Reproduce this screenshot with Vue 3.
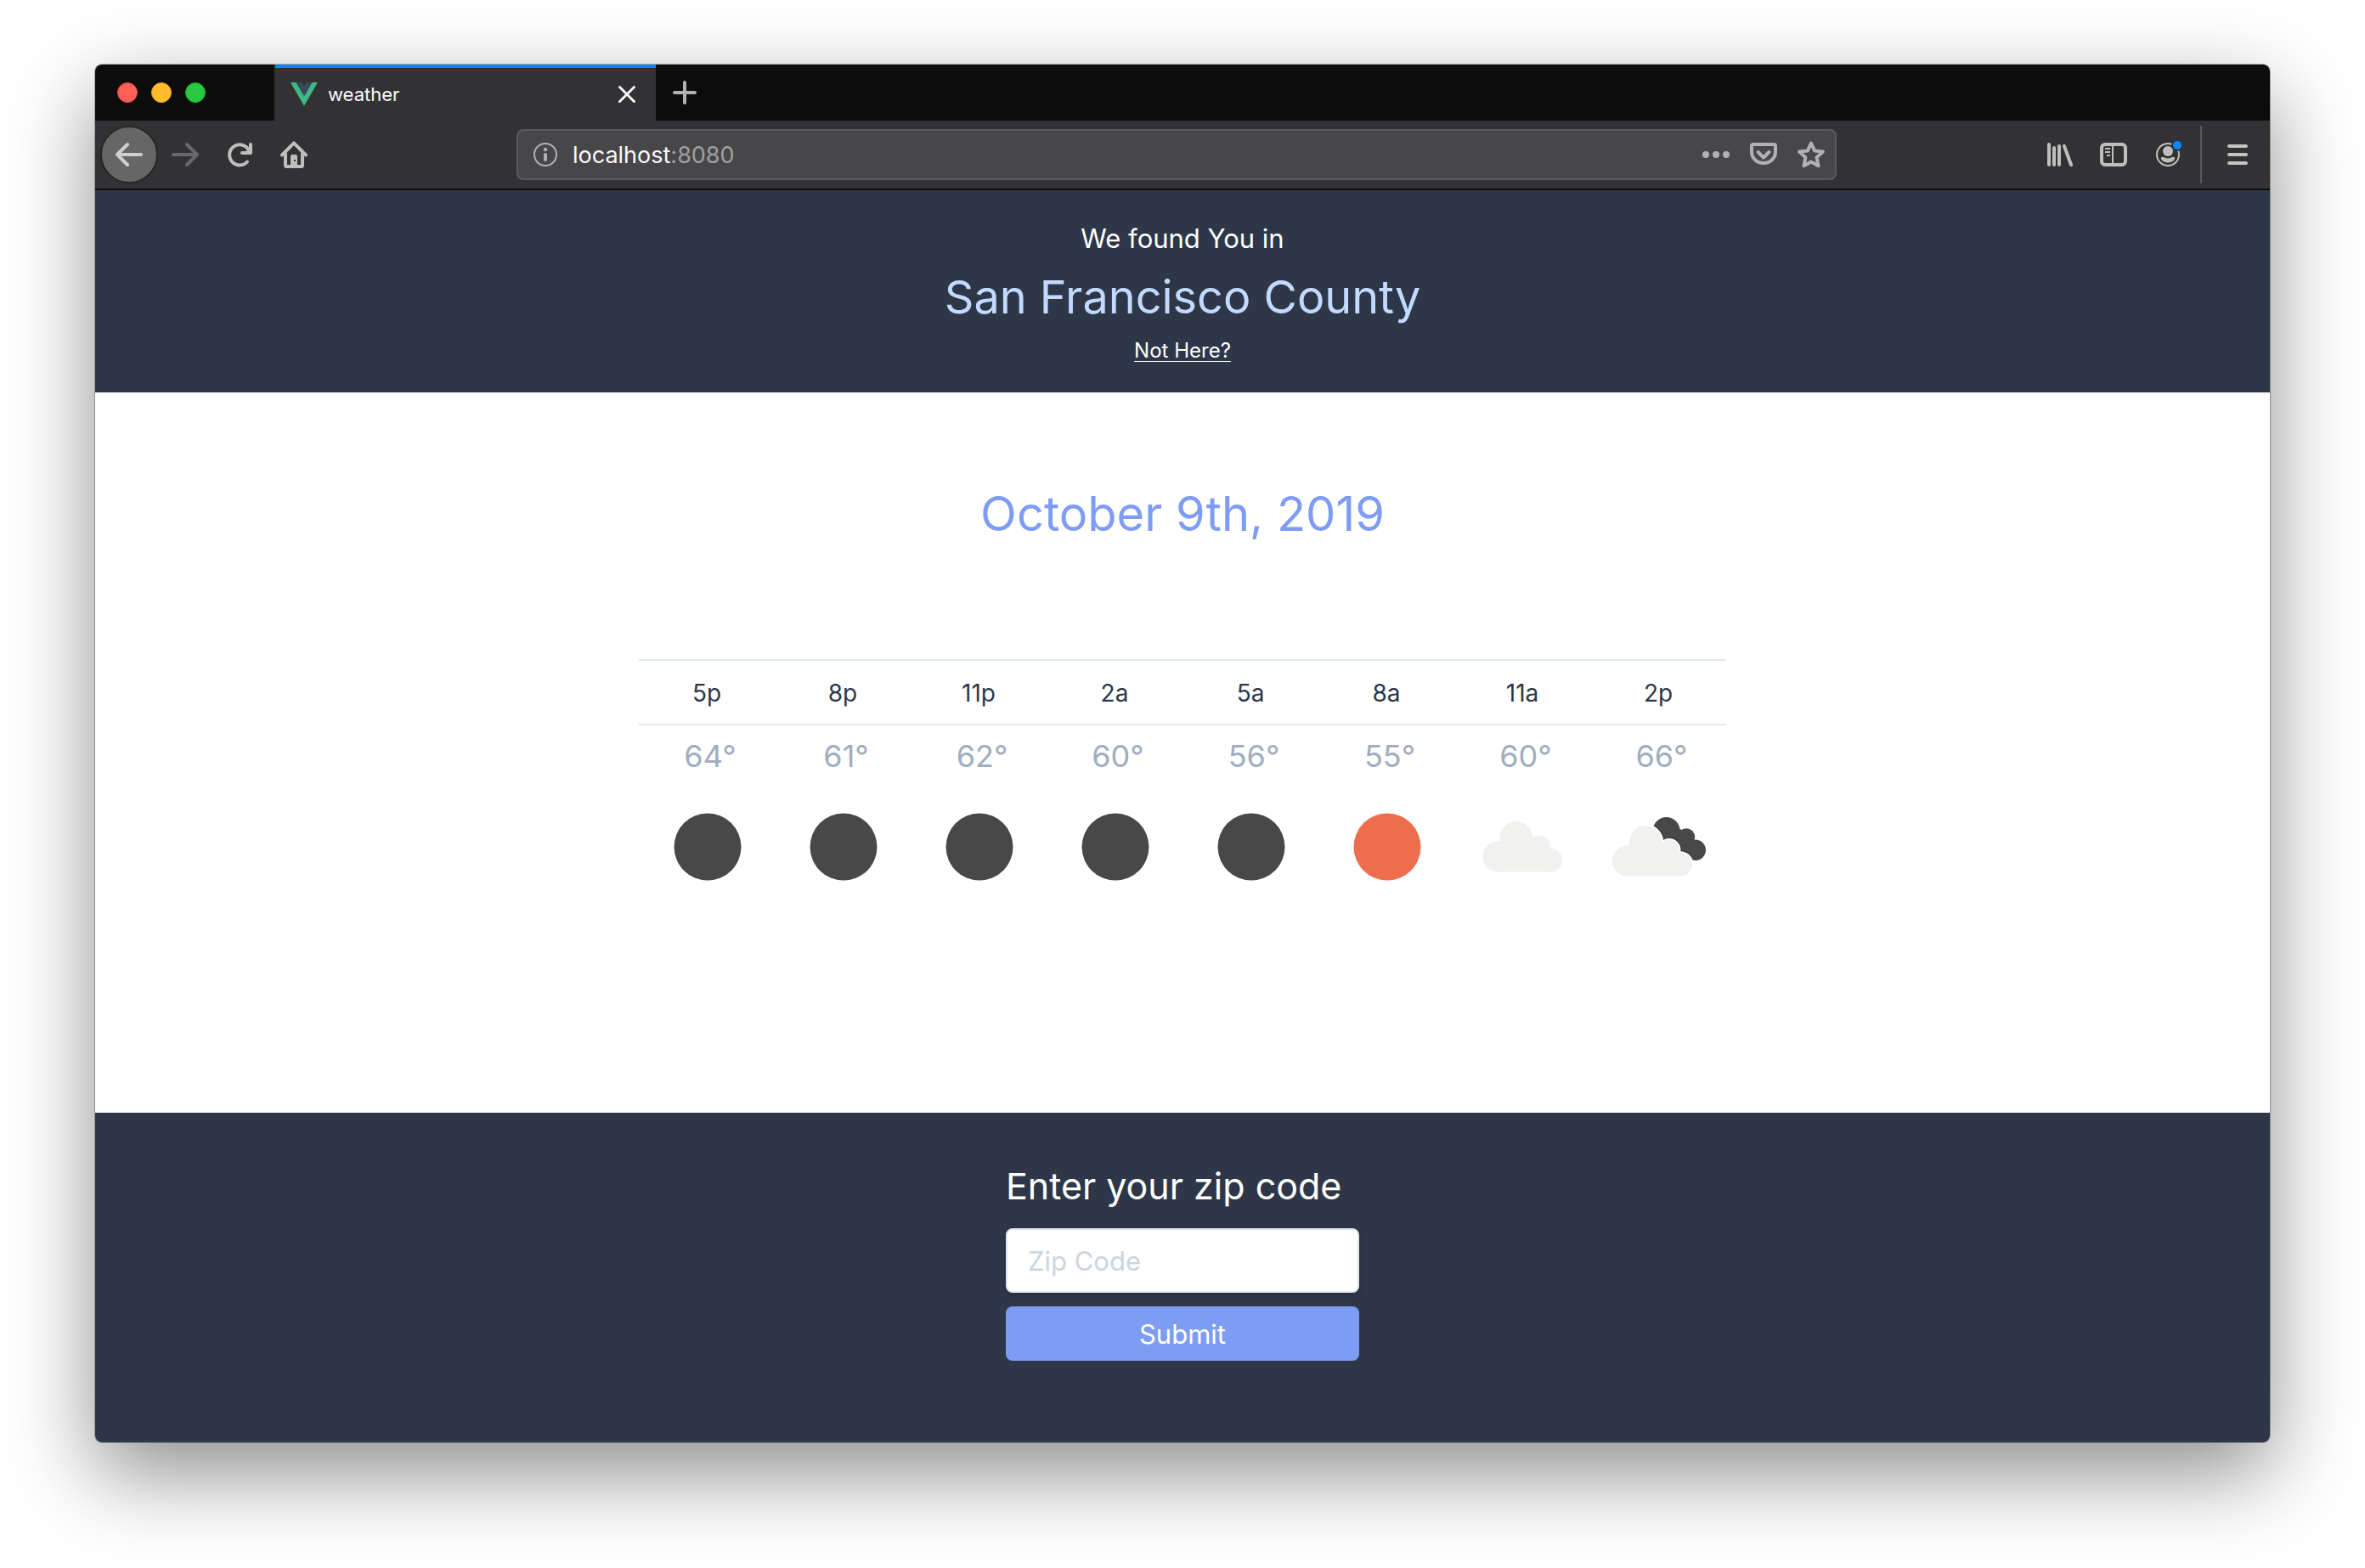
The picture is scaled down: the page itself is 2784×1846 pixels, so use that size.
<script setup>
import { ref } from 'vue'

const zip = ref('')

const forecast = [
  { time: '5p', temp: 64, sky: 'night' },
  { time: '8p', temp: 61, sky: 'night' },
  { time: '11p', temp: 62, sky: 'night' },
  { time: '2a', temp: 60, sky: 'night' },
  { time: '5a', temp: 56, sky: 'night' },
  { time: '8a', temp: 55, sky: 'sun' },
  { time: '11a', temp: 60, sky: 'cloud' },
  { time: '2p', temp: 66, sky: 'clouds' },
]
</script>

<template>
  <div class="desktop">
    <div class="window">
      <div class="tabstrip">
        <div class="lights">
          <button class="light red" aria-label="Close window"></button>
          <button class="light yellow" aria-label="Minimise window"></button>
          <button class="light green" aria-label="Zoom window"></button>
        </div>
        <div class="tab">
          <svg class="icon" width="32" height="28" viewBox="0 0 32 28">
            <path d="M0 0h12.600L16 6l3.400-6H32L16 27.700z" fill="#41b883" />
            <path d="M6.400 0h6.200L16 6l3.400-6h6.200L16 16.600z" fill="#35495e" />
          </svg>
          <span class="tab-title">weather</span>
          <button class="bare" aria-label="Close tab">
            <svg class="icon" width="20" height="20" viewBox="0 0 20 20">
              <path d="M1.500 1.500l17 17M18.500 1.500l-17 17" stroke="#fff" stroke-width="2.800" stroke-linecap="round" />
            </svg>
          </button>
        </div>
        <button class="bare new-tab" aria-label="New tab">
          <svg class="icon" width="28" height="28" viewBox="0 0 28 28">
            <path d="M14 2v24M2 14h24" stroke="#b1b1b3" stroke-width="4" stroke-linecap="round" />
          </svg>
        </button>
      </div>

      <div class="toolbar">
        <div class="nav">
          <button class="bare back" aria-label="Back">
            <svg class="icon" width="32" height="32" viewBox="0 0 32 32">
              <path d="M30 16H3M14 4L2 16l12 12" fill="none" stroke="#cfcfd0" stroke-width="4" stroke-linecap="round" stroke-linejoin="round" />
            </svg>
          </button>
          <button class="bare" aria-label="Forward">
            <svg class="icon" width="32" height="32" viewBox="0 0 32 32">
              <path d="M2 16h27M18 4l12 12-12 12" fill="none" stroke="#68686a" stroke-width="4" stroke-linecap="round" stroke-linejoin="round" />
            </svg>
          </button>
          <button class="bare" aria-label="Reload">
            <svg class="icon" width="32" height="32" viewBox="0 0 32 32">
              <path d="M25 24.500A12 12 0 1 1 26 9.500" fill="none" stroke="#bebebf" stroke-width="4" stroke-linecap="round" />
              <path d="M29 4v10H19" fill="none" stroke="#bebebf" stroke-width="4" stroke-linecap="round" stroke-linejoin="round" />
              <path d="M28 8v5h-5z" fill="#bebebf" />
            </svg>
          </button>
          <button class="bare" aria-label="Home">
            <svg class="icon" width="32" height="32" viewBox="0 0 32 32">
              <path d="M2 16.500L16 2.300l14 14.200" fill="none" stroke="#bebebf" stroke-width="4" stroke-linecap="round" stroke-linejoin="round" />
              <path d="M6 14v14.500q0 1.500 1.500 1.500h17q1.500 0 1.500-1.500V14" fill="none" stroke="#bebebf" stroke-width="4" />
              <path d="M12 29V18q0-2 2-2h4q2 0 2 2v11z" fill="#bebebf" />
              <rect x="16" y="22" width="2" height="2" fill="#323234" />
            </svg>
          </button>
        </div>

        <div class="address">
          <svg class="icon" width="28" height="28" viewBox="0 0 28 28">
            <circle cx="14" cy="14" r="13" fill="none" stroke="#b1b1b3" stroke-width="2" />
            <circle cx="14" cy="8" r="2.200" fill="#b1b1b3" />
            <path d="M14 14v6" stroke="#b1b1b3" stroke-width="4" stroke-linecap="round" />
          </svg>
          <div class="url" role="textbox" aria-label="Address">localhost<span class="port">:8080</span></div>
          <button class="bare" aria-label="Page actions">
            <svg class="icon" width="32" height="32" viewBox="0 0 32 32" fill="#b1b1b3">
              <circle cx="4" cy="16" r="4" /><circle cx="16" cy="16" r="4" /><circle cx="28" cy="16" r="4" />
            </svg>
          </button>
          <button class="bare" aria-label="Save to Pocket">
            <svg class="icon" width="32" height="32" viewBox="0 0 32 32" fill="none" stroke="#b1b1b3" stroke-width="4" stroke-linecap="round" stroke-linejoin="round">
              <path d="M4 4h24q2 0 2 2v7a14 13 0 0 1-28 0V6q0-2 2-2z" />
              <path d="M9.500 13l6.500 6.500 6.500-6.500" />
            </svg>
          </button>
          <button class="bare" aria-label="Bookmark this page">
            <svg class="icon" width="32" height="32" viewBox="0 0 32 32" fill="none" stroke="#b1b1b3" stroke-width="4" stroke-linejoin="round">
              <path d="M16 2.500l4.100 8.900 9.700 1.200-7.200 6.700 1.900 9.900L16 24.500l-8.500 4.700 1.900-9.900-7.200-6.700 9.700-1.200z" />
            </svg>
          </button>
        </div>

        <div class="tools">
          <button class="bare" aria-label="Library">
            <svg class="icon" width="32" height="32" viewBox="0 0 32 32" stroke="#bebebf" stroke-width="4" stroke-linecap="round">
              <path d="M4 4v24M10 8v20M16 6v22M22 6l8 22" />
            </svg>
          </button>
          <button class="bare" aria-label="Sidebars">
            <svg class="icon" width="32" height="32" viewBox="0 0 32 32" fill="none" stroke="#bebebf">
              <rect x="2" y="4" width="28" height="24" rx="4" stroke-width="4" />
              <path d="M15 4v24M6 9h6M6 13h6M8 17h4" stroke-width="2" />
            </svg>
          </button>
          <button class="bare" aria-label="Account">
            <svg class="icon" width="32" height="32" viewBox="0 0 32 32">
              <circle cx="16" cy="16" r="13" fill="none" stroke="#bebebf" stroke-width="2" />
              <circle cx="16" cy="12" r="6" fill="#bebebf" />
              <path d="M8 19.500c1.500-1.500 3-.5 4 0q4 2 8 0c1-.5 2.500-1.500 4 0 1 1.500-2 6-8 6s-9-4.500-8-6z" fill="#bebebf" />
              <circle cx="27" cy="5" r="7" fill="#323234" />
              <circle cx="27" cy="5" r="5" fill="#0a84ff" />
            </svg>
          </button>
          <span class="divider"></span>
          <button class="bare" aria-label="Open menu">
            <svg class="icon" width="32" height="32" viewBox="0 0 32 32" stroke="#c4c4c5" stroke-width="4" stroke-linecap="round">
              <path d="M6 6h20M6 16h20M6 26h20" />
            </svg>
          </button>
        </div>
      </div>

      <header class="place">
        <p class="found">We found You in</p>
        <h1 class="headline county">San Francisco County</h1>
        <p class="elsewhere"><a href="#zip">Not Here?</a></p>
      </header>

      <main class="weather">
        <h2 class="headline date">October 9th, 2019</h2>
        <table class="forecast">
          <thead>
            <tr>
              <th v-for="slot in forecast" :key="slot.time" scope="col">{{ slot.time }}</th>
            </tr>
          </thead>
          <tbody>
            <tr>
              <td v-for="slot in forecast" :key="slot.time" class="temp">{{ slot.temp }}°</td>
            </tr>
            <tr>
              <td v-for="slot in forecast" :key="slot.time">
                <svg class="sky" viewBox="0 0 160 160" role="img" :aria-label="slot.sky">
                  <circle v-if="slot.sky === 'night'" cx="81" cy="81" r="39.500" fill="#484849" />
                  <circle v-else-if="slot.sky === 'sun'" cx="81" cy="81" r="39.500" fill="#ed6e4d" />
                  <g v-else-if="slot.sky === 'cloud'" transform="translate(1 0)" fill="#f1f1ef">
                    <circle cx="50.300" cy="92.500" r="18" />
                    <circle cx="71.800" cy="70.500" r="19.500" />
                    <circle cx="99.500" cy="79.500" r="12" />
                    <circle cx="112.500" cy="96.700" r="13.900" />
                    <path d="M50.300 110.500V74.500L60 74h40l12.500 10v26.500z" />
                  </g>
                  <g v-else transform="translate(2 0)">
                    <g fill="#484849">
                      <circle cx="87.600" cy="62" r="16" />
                      <circle cx="111" cy="69.500" r="10.200" />
                      <circle cx="121.800" cy="84.800" r="12.200" />
                      <path d="M88 60h16l10 8 8 16-4 11-30-14z" />
                    </g>
                    <g transform="translate(-8.500 5)" fill="#f1f1ef">
                      <g stroke="#222" stroke-opacity=".5" stroke-width="5">
                        <path d="M85 56.300A19.500 19.500 0 0 1 91 68" fill="none" />
                        <path d="M98 67.600A12 12 0 0 1 111.500 80" fill="none" />
                        <path d="M112.500 82.800A13.900 13.900 0 0 1 123.500 88.500" fill="none" />
                      </g>
                      <g stroke="#fff" stroke-width="3">
                        <circle cx="71.800" cy="70.500" r="19.500" />
                        <circle cx="99.500" cy="79.500" r="12" />
                        <circle cx="112.500" cy="96.700" r="13.900" />
                      </g>
                      <circle cx="50.300" cy="92.500" r="18" />
                      <circle cx="71.800" cy="70.500" r="19.500" />
                      <circle cx="99.500" cy="79.500" r="12" />
                      <circle cx="112.500" cy="96.700" r="13.900" />
                      <path d="M50.300 110.500V74.500L60 74h40l12.500 10v26.500z" />
                    </g>
                  </g>
                </svg>
              </td>
            </tr>
          </tbody>
        </table>
      </main>

      <footer class="lookup">
        <form class="zip-form" @submit.prevent>
          <label for="zip">Enter your zip code</label>
          <input id="zip" v-model="zip" type="text" placeholder="Zip Code" />
          <button class="submit" type="submit">Submit</button>
        </form>
      </footer>
    </div>
  </div>
</template>

<style>
body {
  margin: 0;
  background: #fff;
}
</style>

<style scoped>
* {
  box-sizing: border-box;
}

.desktop {
  min-height: 100vh;
  padding: 76px 112px 148px;
  display: flex;
  font-family: Inter, "Liberation Sans", sans-serif;
  overflow: hidden;
}

.window {
  flex: 1;
  min-width: 0;
  display: flex;
  flex-direction: column;
  border-radius: 8px;
  overflow: hidden;
  background: #fff;
  box-shadow: 0 0 0 1px rgba(0, 0, 0, 0.25), 0 36px 100px rgba(0, 0, 0, 0.45);
}

.icon {
  display: block;
  flex: none;
}

.bare {
  padding: 0;
  border: 0;
  background: none;
  flex: none;
}

.tabstrip {
  height: 66px;
  display: flex;
  align-items: stretch;
  background: #0c0c0d;
}

.lights {
  width: 212px;
  padding-left: 26px;
  display: flex;
  align-items: center;
  gap: 16px;
  border-right: 2px solid #252526;
}

.light {
  width: 24px;
  height: 24px;
  padding: 0;
  border: 1px solid;
  border-radius: 50%;
}

.red {
  background: #ff5f57;
  border-color: #e2463f;
}

.yellow {
  background: #ffbd2e;
  border-color: #e1a116;
}

.green {
  background: #28c940;
  border-color: #14ae26;
}

.tab {
  width: 448px;
  padding: 0 24px 0 18px;
  display: flex;
  align-items: center;
  gap: 12px;
  background: #323234;
  border-top: 4px solid #0a84ff;
}

.tab-title {
  flex: 1;
  font-size: 22px;
  line-height: 32px;
  color: #f9f9fa;
}

.new-tab {
  padding: 0 20px;
}

.toolbar {
  height: 82px;
  padding: 0 22px 0 6px;
  display: flex;
  align-items: center;
  background: #323234;
  border-bottom: 2px solid #0c0c0d;
}

.nav {
  display: flex;
  align-items: center;
  gap: 32px;
}

.back {
  width: 68px;
  height: 68px;
  margin-right: -16px;
  display: grid;
  place-items: center;
  border: 2px solid #262627;
  border-radius: 50%;
  background: #666667;
}

.address {
  flex: 1;
  height: 60px;
  margin: 0 246px;
  padding: 0 12px 0 18px;
  display: flex;
  align-items: center;
  gap: 24px;
  background: #474749;
  border: 2px solid #5a5a5c;
  border-radius: 8px;
}

.url {
  flex: 1;
  margin-left: -6px;
  padding-top: 2px;
  font-size: 27px;
  line-height: 40px;
  color: #f9f9fa;
}

.port {
  color: #a0a0a1;
}

.tools {
  display: flex;
  align-items: center;
  gap: 32px;
}

.divider {
  width: 2px;
  height: 68px;
  margin: 0 -6px 0 -10px;
  background: #5b5b5d;
}

.place {
  padding: 33px 32px 31px;
  text-align: center;
  background: #2d3748;
  color: #fff;
}

.found {
  margin: 0;
  font-size: 31px;
  line-height: 48px;
}

.headline {
  margin: 0;
  font-weight: 400;
  line-height: 90px;
}

.county {
  font-size: 54px;
  color: #c3dafe;
}

.elsewhere {
  margin: 0;
  font-size: 24px;
  line-height: 36px;
}

.elsewhere a {
  color: inherit;
  text-decoration: underline;
  text-decoration-thickness: 1px;
  text-underline-offset: 4px;
}

.weather {
  flex: 1;
  padding: 98px 32px 96px;
  display: flex;
  flex-direction: column;
  align-items: center;
  gap: 126px;
}

.date {
  font-size: 56px;
  color: #7f9cf5;
}

.forecast {
  width: 1280px;
  max-width: 100%;
  table-layout: fixed;
  border-collapse: separate;
  border-spacing: 0;
  text-align: center;
}

.forecast th {
  padding: 17px 0 15px;
  border: solid #e2e8f0;
  border-width: 2px 0;
  font-size: 28px;
  line-height: 42px;
  font-weight: 400;
  color: #2d3748;
}

.forecast td {
  padding: 0;
}

.forecast .temp {
  padding: 10px 0 0 8px;
  font-size: 36px;
  line-height: 52px;
  color: #a0aec0;
}

.sky {
  display: block;
  width: 100%;
}

.lookup {
  padding: 52px 32px 96px;
  background: #2d3748;
  color: #fff;
}

.zip-form {
  width: 416px;
  max-width: 100%;
  margin: 0 auto;
  display: flex;
  flex-direction: column;
  gap: 16px;
}

.zip-form label {
  font-size: 43px;
  line-height: 68px;
  white-space: nowrap;
}

.zip-form input {
  width: 100%;
  padding: 12px 24px;
  border: 2px solid #e2e8f0;
  border-radius: 8px;
  background: #fff;
  color: #2d3748;
  font: inherit;
  font-size: 31px;
  line-height: 48px;
  height: 76px;
  box-shadow: 0 2px 6px rgba(0, 0, 0, 0.15);
}

.zip-form input::placeholder {
  color: #cbd5e0;
  opacity: 1;
}

.submit {
  padding: 9px 24px 7px;
  border: 0;
  border-radius: 8px;
  background: #7f9cf5;
  color: #fff;
  font: inherit;
  font-size: 31px;
  line-height: 48px;
}
</style>
